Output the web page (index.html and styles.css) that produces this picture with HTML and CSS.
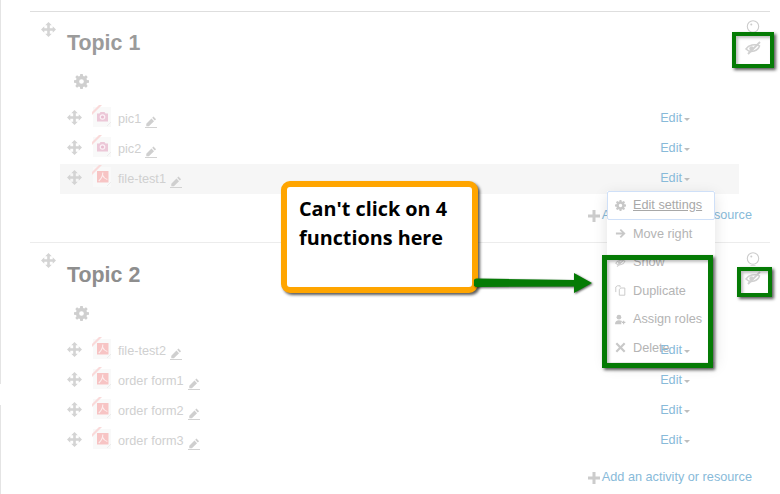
FILE: index.html
```html
<!DOCTYPE html>
<html lang="en">
<head>
<meta charset="utf-8">
<title>Course topics</title>
<link rel="stylesheet" href="styles.css">
</head>
<body>
<svg class="sprite" xmlns="http://www.w3.org/2000/svg">
  <symbol id="move" viewBox="0 0 16 16"><path d="M8 0l3.500 3.500H9.400v3.100h3.100V4.500L16 8l-3.500 3.500V9.400H9.400v3.100h2.100L8 16l-3.500-3.500h2.100V9.400H3.500v2.100L0 8l3.500-3.500v2.100h3.100V3.500H4.500z"/></symbol>
  <symbol id="gear" viewBox="0 0 16 16"><path fill-rule="evenodd" d="M6.7 0h2.600l.4 2.200 1.200.5L12.800 1.400l1.800 1.800-1.300 1.900.5 1.200 2.200.4v2.600l-2.200.4-.5 1.200 1.300 1.900-1.800 1.800-1.900-1.300-1.200.5-.4 2.200H6.700l-.4-2.200-1.200-.5-1.900 1.300-1.800-1.800 1.300-1.900-.5-1.200L0 9.300V6.700l2.200-.4.5-1.200-1.300-1.900 1.800-1.800 1.900 1.300 1.200-.5zM8 5.500a2.500 2.500 0 1 0 0 5 2.500 2.500 0 0 0 0-5z"/></symbol>
  <symbol id="pencil" viewBox="0 0 13 13"><path d="M9.200.6l2.800 2.800-1.400 1.400-2.800-2.800zM7 2.800l2.800 2.800-5.600 5.600H1.400V8.400z"/><rect x="0" y="12" width="13" height="1"/></symbol>
  <symbol id="pdf" viewBox="0 0 20 22"><path fill="#f9f9f9" d="M1 2h18v20H1z"/><path fill="#fadada" d="M0 7L7 0h3L0 10z"/><path fill="#f7c4c4" d="M5 6h11.500v11.500H5z"/><path fill="none" stroke="#fdeeee" stroke-width="1.100" d="M10.800 7.500c0 3.500-1.300 6-4 8.500M10.800 10.500c.8 2.300 2.700 3.500 4.500 4"/><path fill="none" stroke="#ececec" d="M15 21l4-4"/></symbol>
  <symbol id="pic" viewBox="0 0 20 22"><path fill="#f9f9f9" d="M1 2h18v20H1z"/><path fill="#fadada" d="M0 7L7 0h3L0 10z"/><path fill="#ecc8d8" d="M5 8.500h2.500l1-1.500h4l1 1.500H16V16.500H5z"/><circle cx="10.500" cy="12" r="2.800" fill="#fbf0f5"/><circle cx="10.500" cy="12" r="1.600" fill="#e8bcd0"/><path fill="none" stroke="#ececec" d="M15 21l4-4"/></symbol>
  <symbol id="bulb" viewBox="0 0 14 14"><circle cx="7" cy="6.500" r="5.700" fill="none" stroke="#cccccc" stroke-width="1.100"/><circle cx="5.300" cy="4.600" r="1" fill="#cccccc"/><path stroke="#dddddd" d="M4.500 13.500h5"/></symbol>
  <symbol id="eyeoff" viewBox="0 0 16 14"><path fill="none" stroke="#d0d0d0" stroke-width="1.500" d="M1 8c2.500-4 9-5.500 13.500-3-1.500 4.500-8.500 8-13.500 3z"/><circle cx="6.500" cy="7.500" r="2.200" fill="#d0d0d0"/><path stroke="#d0d0d0" stroke-width="1.800" d="M15 1L3 13"/></symbol>
  <symbol id="right" viewBox="0 0 12 12"><path d="M6.500 1l5 5-5 5-1.400-1.400L7.700 7H1V5h6.700L5.100 2.400z"/></symbol>
  <symbol id="copy" viewBox="0 0 14 14"><path fill="none" stroke="#c4c4c4" stroke-width="1.100" d="M1 9V2.500L3 1h3.500v2M5.500 5.500L7.500 3.800H12.500V13H5.500z"/></symbol>
  <symbol id="role" viewBox="0 0 14 14"><circle cx="5" cy="4" r="3"/><path d="M0 13c0-3.500 2-5 5-5s4 1 4.500 2H8v3z"/><path d="M11 8.500v4.500M8.800 10.700h4.400" stroke="#c4c4c4" stroke-width="1.400"/></symbol>
  <symbol id="cross" viewBox="0 0 12 12"><path d="M2.300.6L6 4.300 9.700.6l1.700 1.700L7.700 6l3.700 3.700-1.700 1.700L6 7.700l-3.700 3.700L.6 9.700 4.300 6 .6 2.300z"/></symbol>
</svg>

<main class="page">
  <section class="section">
    <header class="head">
      <svg class="handle"><use href="#move"/></svg>
      <div class="heading">
        <h2 class="title">Topic 1</h2>
        <svg class="gear"><use href="#gear"/></svg>
      </div>
      <div class="toggles">
        <svg class="bulb"><use href="#bulb"/></svg>
        <svg class="eye"><use href="#eyeoff"/></svg>
      </div>
    </header>
    <ul class="rows">
      <li class="row"><svg class="drag"><use href="#move"/></svg><svg class="file"><use href="#pic"/></svg><span class="name">pic1</span><svg class="pen"><use href="#pencil"/></svg><a class="edit">Edit<i class="caret"></i></a></li>
      <li class="row"><svg class="drag"><use href="#move"/></svg><svg class="file"><use href="#pic"/></svg><span class="name">pic2</span><svg class="pen"><use href="#pencil"/></svg><a class="edit">Edit<i class="caret"></i></a></li>
      <li class="row row-hover"><svg class="drag"><use href="#move"/></svg><svg class="file"><use href="#pdf"/></svg><span class="name">file-test1</span><svg class="pen"><use href="#pencil"/></svg><a class="edit">Edit<i class="caret"></i></a></li>
    </ul>
    <div class="add"><svg class="plus" viewBox="0 0 12 12"><path d="M4.500 0h3v4.500H12v3H7.500V12h-3V7.500H0v-3h4.500z"/></svg><a class="add-link">Add an activity or resource</a></div>
  </section>

  <section class="section">
    <header class="head">
      <svg class="handle"><use href="#move"/></svg>
      <div class="heading">
        <h2 class="title title-two">Topic 2</h2>
        <svg class="gear"><use href="#gear"/></svg>
      </div>
      <div class="toggles">
        <svg class="bulb"><use href="#bulb"/></svg>
        <svg class="eye"><use href="#eyeoff"/></svg>
      </div>
    </header>
    <ul class="rows">
      <li class="row"><svg class="drag"><use href="#move"/></svg><svg class="file"><use href="#pdf"/></svg><span class="name">file-test2</span><svg class="pen"><use href="#pencil"/></svg><a class="edit">Edit<i class="caret"></i></a></li>
      <li class="row"><svg class="drag"><use href="#move"/></svg><svg class="file"><use href="#pdf"/></svg><span class="name">order form1</span><svg class="pen"><use href="#pencil"/></svg><a class="edit">Edit<i class="caret"></i></a></li>
      <li class="row"><svg class="drag"><use href="#move"/></svg><svg class="file"><use href="#pdf"/></svg><span class="name">order form2</span><svg class="pen"><use href="#pencil"/></svg><a class="edit">Edit<i class="caret"></i></a></li>
      <li class="row"><svg class="drag"><use href="#move"/></svg><svg class="file"><use href="#pdf"/></svg><span class="name">order form3</span><svg class="pen"><use href="#pencil"/></svg><a class="edit">Edit<i class="caret"></i></a></li>
    </ul>
    <div class="add"><svg class="plus" viewBox="0 0 12 12"><path d="M4.500 0h3v4.500H12v3H7.500V12h-3V7.500H0v-3h4.500z"/></svg><a class="add-link">Add an activity or resource</a></div>
  </section>

  <ul class="menu">
    <li class="item item-active"><svg class="mi"><use href="#gear"/></svg><span class="item-label">Edit settings</span></li>
    <li class="item"><svg class="mi"><use href="#right"/></svg><span>Move right</span></li>
    <li class="item"><svg class="mi"><use href="#eyeoff"/></svg><span>Show</span></li>
    <li class="item"><svg class="mi"><use href="#copy"/></svg><span>Duplicate</span></li>
    <li class="item"><svg class="mi"><use href="#role"/></svg><span>Assign roles</span></li>
    <li class="item"><svg class="mi"><use href="#cross"/></svg><span>Delete</span></li>
  </ul>

  <div class="mark mark-eye-one"></div>
  <div class="mark mark-eye-two"></div>
  <div class="mark mark-menu"></div>

  <div class="callout">Can't click on 4<br>functions here</div>
  <svg class="arrow" viewBox="0 0 120 22"><path d="M3 5.500L100 7V0l18 10-18 10v-6.500L3 14a4.200 4.200 0 0 1 0-8.500z"/></svg>
</main>
</body>
</html>
```

FILE: styles.css
```css
* { box-sizing: border-box; }

html, body { margin: 0; padding: 0; }

body {
  width: 780px;
  height: 494px;
  overflow: hidden;
  background: #fff;
  font-family: "Liberation Sans", Arial, sans-serif;
  font-size: 12.7px;
}

.sprite { display: none; }

.page {
  position: relative;
  height: 494px;
  padding-top: 11px;
  background:
    linear-gradient(#e4e4e4, #e4e4e4) 0 0 / 1px 384px no-repeat,
    linear-gradient(#e4e4e4, #e4e4e4) 0 405px / 1px 89px no-repeat;
}

.section {
  width: 740px;
  height: 231px;
  margin-left: 30px;
  border-top: 1px solid #dedede;
}

.section + .section {
  border-top-color: #ececec;
  padding-top: 1px;
}

.section + .section .handle { margin-top: 9px; }
.section + .section .eye { margin-top: 5px; }

.head {
  display: flex;
  height: 92px;
  padding: 0 9px 0 11px;
}

.handle {
  width: 15px;
  height: 15px;
  margin-top: 10px;
  fill: #d4d4d4;
}

.heading {
  display: flex;
  flex-direction: column;
  align-items: flex-start;
  margin-left: 11px;
}

.title {
  margin: 18px 0 0;
  font-size: 21.4px;
  line-height: 26px;
  font-weight: 700;
  color: #9b9b9b;
}

.title-two { color: #8e8e8e; }

.gear {
  width: 15px;
  height: 15px;
  margin: 18px 0 0 7px;
  fill: #cfcfcf;
}

.toggles {
  display: flex;
  flex-direction: column;
  align-items: center;
  margin-left: auto;
  width: 16px;
}

.bulb {
  width: 14px;
  height: 14px;
  margin-top: 8px;
}

.eye {
  width: 16px;
  height: 14px;
  margin-top: 7px;
}

.rows {
  list-style: none;
  margin: 0;
  padding: 0;
}

.row {
  display: flex;
  align-items: center;
  width: 679px;
  height: 30px;
  margin-left: 30px;
  padding: 0 49px 0 7px;
}

.row-hover { background: #f6f6f6; }

.drag {
  width: 15px;
  height: 15px;
  margin-top: -3px;
  fill: #d4d4d4;
}

.file {
  width: 20px;
  height: 22px;
  margin: -6px 0 0 10px;
}

.name {
  margin-left: 6px;
  color: #d0d0d0;
}

.pen {
  width: 12px;
  height: 12px;
  margin: 6px 0 0 4px;
  fill: #cfcfcf;
}

.edit {
  position: relative;
  z-index: 2;
  display: flex;
  align-items: center;
  margin: -2px 0 0 auto;
  color: #88bad9;
}

.caret {
  width: 0;
  height: 0;
  margin: 2px 0 0 2px;
  border: 3px solid transparent;
  border-top-color: #bdbdbd;
  border-bottom: 0;
}

.add {
  display: flex;
  align-items: center;
  justify-content: flex-end;
  height: 28px;
  margin-top: 7px;
  padding-right: 18px;
}

.plus {
  width: 12px;
  height: 12px;
  margin: 2px 2px 0 0;
  fill: #cccccc;
}

.add-link { color: #88bad9; }

.menu {
  position: absolute;
  left: 607px;
  top: 191px;
  width: 108px;
  margin: 0;
  padding: 0;
  list-style: none;
  background: #fff;
  box-shadow: 0 4px 14px rgba(0, 0, 0, 0.12);
}

.item {
  display: flex;
  align-items: center;
  height: 28.5px;
  padding-left: 8px;
  color: #b4b4b4;
}

.item-active {
  border: 1.5px solid #cfe0f8;
  border-radius: 2px;
  padding-left: 7px;
  color: #a8a8a8;
}

.item-label { text-decoration: underline; }

.mi {
  flex: none;
  width: 11px;
  height: 11px;
  margin-right: 7px;
  fill: #c8c8c8;
}

.mark {
  position: absolute;
  z-index: 3;
  border: 4.5px solid #057b05;
  box-shadow: 2px 2px 3px rgba(0, 0, 0, 0.65), inset 2px 2px 3px rgba(0, 0, 0, 0.25);
}

.mark-eye-one { left: 732px; top: 32px; width: 42px; height: 36px; }
.mark-eye-two { left: 737px; top: 267px; width: 35px; height: 30px; }
.mark-menu { left: 602px; top: 255px; width: 111px; height: 113px; border-width: 5px; }

.callout {
  position: absolute;
  z-index: 4;
  left: 281px;
  top: 181px;
  width: 197px;
  height: 112px;
  padding: 7px 0 0 12px;
  border: 6px solid #ffa500;
  border-radius: 9px;
  background: #fff;
  box-shadow: 2px 2px 3px rgba(0, 0, 0, 0.65);
  font-family: "Open Sans", sans-serif;
  font-size: 19.8px;
  line-height: 29px;
  font-weight: 700;
  color: #000;
}

.arrow {
  position: absolute;
  z-index: 4;
  left: 474px;
  top: 273px;
  width: 120px;
  height: 22px;
  fill: #057b05;
  filter: drop-shadow(1px 1px 1px rgba(0, 0, 0, 0.65));
}
```
